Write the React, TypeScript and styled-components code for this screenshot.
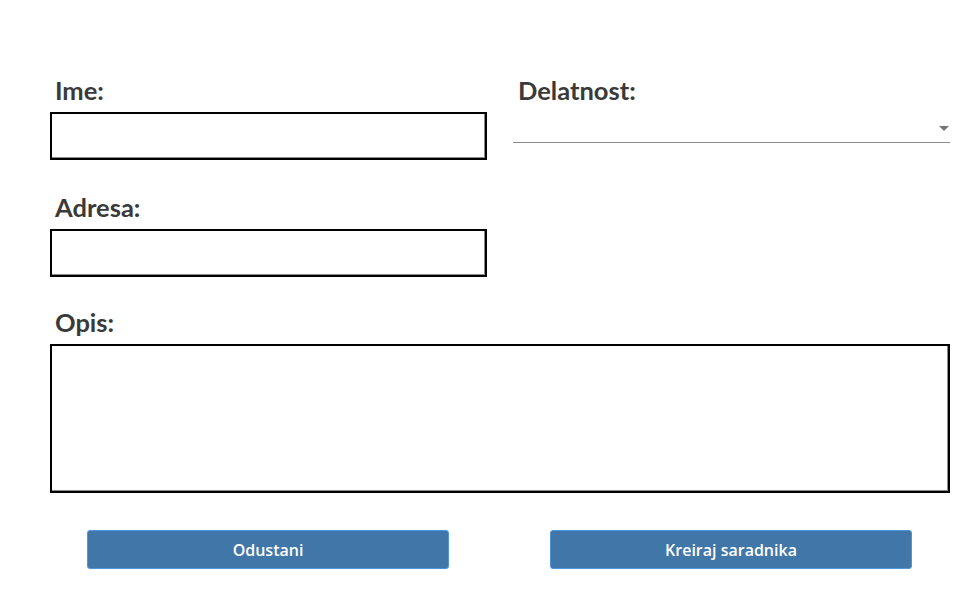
import React from 'react';
import styled, { createGlobalStyle } from 'styled-components';

const GlobalStyle = createGlobalStyle`
  body {
    margin: 0;
    background: #ffffff;
    font-family: 'Lato', 'Open Sans', sans-serif;
  }
`;

const Form = styled.form`
  display: flex;
  flex-direction: column;
  padding: 75px 29px 0 50px;
`;

const Grid = styled.div`
  display: grid;
  grid-template-columns: 437px 437px;
  grid-template-rows: auto auto auto;
  column-gap: 26px;
  row-gap: 32px;
`;

const Field = styled.div<{ $wide?: boolean; $pull?: number }>`
  display: flex;
  flex-direction: column;
  grid-column: ${(p) => (p.$wide ? '1 / span 2' : 'auto')};
  margin-top: ${(p) => (p.$pull ? `-${p.$pull}px` : '0')};
`;

const Label = styled.label`
  display: block;
  font-family: 'Lato', sans-serif;
  font-weight: 700;
  font-size: 25.5px;
  line-height: 30px;
  color: #3a3a3a;
  margin: 0 0 7px 5px;
`;

const TextInput = styled.input`
  box-sizing: border-box;
  height: 48px;
  width: 100%;
  border: 2px solid #000;
  box-shadow: inset -1px -1px 0 #8a8a8a;
  outline: none;
  padding: 0 8px;
  font-size: 16px;
`;

const TextArea = styled.textarea`
  box-sizing: border-box;
  height: 149px;
  width: 100%;
  border: 2px solid #000;
  box-shadow: inset -1px -1px 0 #8a8a8a;
  outline: none;
  resize: none;
  padding: 6px 8px;
  font-size: 16px;
`;

const SelectBox = styled.div`
  position: relative;
  height: 30px;
  border-bottom: 1px solid #8a8a8a;
`;

const Arrow = styled.span`
  position: absolute;
  right: 1px;
  top: 14px;
  width: 0;
  height: 0;
  border-left: 5px solid transparent;
  border-right: 5px solid transparent;
  border-top: 5px solid #757575;
`;

const Actions = styled.div`
  display: grid;
  grid-template-columns: 437px 437px;
  column-gap: 26px;
  margin-top: 37px;
`;

const Button = styled.button`
  justify-self: start;
  margin-left: 37px;
  width: 362px;
  height: 39px;
  background: #4176a8;
  border: 1px solid #4d95dc;
  border-radius: 3px;
  color: #ffffff;
  font-family: 'Open Sans', 'Noto Sans', sans-serif;
  font-weight: 600;
  font-size: 16px;
  cursor: pointer;
`;

export default function App() {
  return (
    <>
      <GlobalStyle />
      <Form onSubmit={(e) => e.preventDefault()}>
        <Grid>
          <Field>
            <Label>Ime:</Label>
            <TextInput type="text" />
          </Field>
          <Field>
            <Label>Delatnost:</Label>
            <SelectBox>
              <Arrow />
            </SelectBox>
          </Field>
          <Field>
            <Label>Adresa:</Label>
            <TextInput type="text" />
          </Field>
          <div />
          <Field $wide $pull={2}>
            <Label>Opis:</Label>
            <TextArea />
          </Field>
        </Grid>
        <Actions>
          <Button type="button">Odustani</Button>
          <Button type="submit">Kreiraj saradnika</Button>
        </Actions>
      </Form>
    </>
  );
}
